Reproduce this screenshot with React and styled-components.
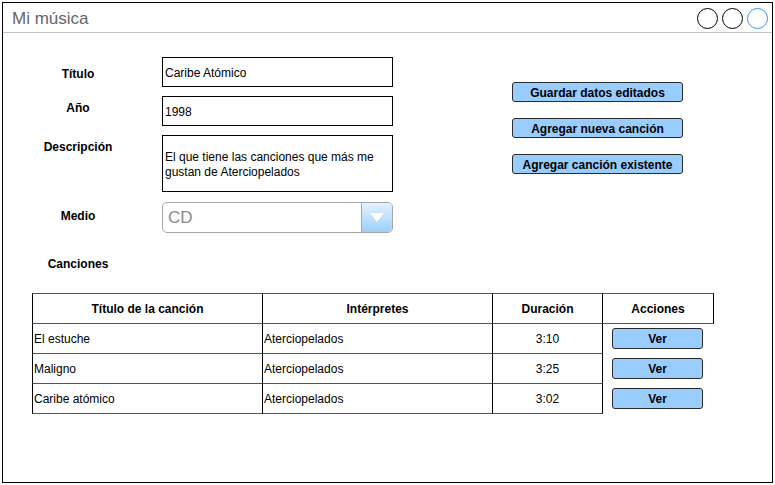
import React from "react";
import styled, { createGlobalStyle } from "styled-components";

const Global = createGlobalStyle`
  html, body { margin: 0; padding: 0; background: #fff; }
  body { font-family: "Liberation Sans", Arial, Helvetica, sans-serif; font-size: 12px; color: #000; }
  * { box-sizing: border-box; }
`;

const Window = styled.div`
  margin: 2px 0 0 2px;
  width: 771px;
  height: 481px;
  border: 1px solid #000;
  display: flex;
  flex-direction: column;
`;

const TitleBar = styled.div`
  height: 30px;
  border-bottom: 1px solid #c4c4c4;
  display: flex;
  align-items: center;
  justify-content: space-between;
  padding: 0 4px 0 9px;
`;

const WindowTitle = styled.div`
  font-size: 17px;
  color: #666;
  line-height: 20px;
  margin-top: 3px;
`;

const Controls = styled.div`
  display: flex;
  gap: 4px;
  margin-top: 1px;
`;

const Circle = styled.div`
  width: 21px;
  height: 21px;
  border-radius: 50%;
  border: 1.5px solid ${(p) => (p.$blue ? "#2a95f5" : "#000")};
`;

const Content = styled.div`
  padding-top: 24px;
  display: flex;
  flex-direction: column;
`;

const TopSection = styled.div`
  display: flex;
  gap: 119px;
`;

const FormGrid = styled.div`
  display: grid;
  grid-template-columns: 150px 231px;
  column-gap: 9px;
  row-gap: 9px;
`;

const Label = styled.div`
  font-weight: bold;
  font-size: 12px;
  line-height: 14px;
  text-align: center;
  padding-top: ${(p) => p.$offset}px;
`;

const TextBox = styled.div`
  height: ${(p) => p.$h || 30}px;
  border: 1px solid #000;
  padding: 2px 2px 0;
  display: flex;
  align-items: center;
  font-size: 12px;
  line-height: 15px;
`;

const Select = styled.div`
  height: 31px;
  margin-top: 1px;
  border: 1px solid #a6a6a6;
  border-radius: 5px;
  display: flex;
  overflow: hidden;
`;

const SelectValue = styled.div`
  flex: 1;
  font-size: 17px;
  color: #8a8a8a;
  display: flex;
  align-items: center;
  padding-left: 5px;
`;

const SelectArrow = styled.div`
  width: 31px;
  border-left: 1px solid #a6a6a6;
  background: linear-gradient(to bottom, #e4f2ff, #9dcffb);
  display: flex;
  align-items: center;
  justify-content: center;
`;

const ButtonColumn = styled.div`
  display: flex;
  flex-direction: column;
  gap: 16px;
  padding-top: 25px;
`;

const ActionButton = styled.div`
  width: ${(p) => p.$w || 171}px;
  height: ${(p) => p.$h || 20}px;
  padding-top: 1px;
  background: #99ccff;
  border: 1px solid #2b2b2b;
  border-radius: 3px;
  font-weight: bold;
  font-size: 12px;
  display: flex;
  align-items: center;
  justify-content: center;
`;

const SectionLabel = styled.div`
  width: 150px;
  font-weight: bold;
  font-size: 12px;
  line-height: 14px;
  text-align: center;
  margin-top: 24px;
`;

const Table = styled.div`
  margin: 22px 0 0 29px;
  display: grid;
  grid-template-columns: 231px 230px 110px 111px;
`;

const HeadCell = styled.div`
  height: 31px;
  border-top: 1px solid #555;
  border-bottom: 1px solid #555;
  border-right: 1px solid #000;
  border-left: ${(p) => (p.$first ? "1px solid #000" : "none")};
  font-weight: bold;
  display: flex;
  align-items: center;
  justify-content: center;
`;

const Cell = styled.div`
  height: 30px;
  border-bottom: 1px solid #555;
  border-right: 1px solid #000;
  border-left: ${(p) => (p.$first ? "1px solid #000" : "none")};
  display: flex;
  align-items: center;
  justify-content: ${(p) => (p.$center ? "center" : "flex-start")};
  padding-left: ${(p) => (p.$center ? 0 : 1)}px;
`;

const ActionCell = styled.div`
  height: 30px;
  display: flex;
  align-items: flex-start;
  justify-content: center;
  padding: 4px 2px 0 0;
`;

const songs = [
  { title: "El estuche", artist: "Aterciopelados", dur: "3:10" },
  { title: "Maligno", artist: "Aterciopelados", dur: "3:25" },
  { title: "Caribe atómico", artist: "Aterciopelados", dur: "3:02" },
];

export default function App() {
  return (
    <>
      <Global />
      <Window>
        <TitleBar>
          <WindowTitle>Mi música</WindowTitle>
          <Controls>
            <Circle />
            <Circle />
            <Circle $blue />
          </Controls>
        </TitleBar>
        <Content>
          <TopSection>
            <FormGrid>
              <Label $offset={10}>Título</Label>
              <TextBox>Caribe Atómico</TextBox>
              <Label $offset={5}>Año</Label>
              <TextBox>1998</TextBox>
              <Label $offset={5}>Descripción</Label>
              <TextBox $h={57}>
                El que tiene las canciones que más me
                <br />
                gustan de Aterciopelados
              </TextBox>
              <Label $offset={8}>Medio</Label>
              <Select>
                <SelectValue>CD</SelectValue>
                <SelectArrow>
                  <svg width="16" height="11" viewBox="0 0 16 11">
                    <polygon points="1,1 15,1 8,10" fill="#fff" />
                  </svg>
                </SelectArrow>
              </Select>
            </FormGrid>
            <ButtonColumn>
              <ActionButton>Guardar datos editados</ActionButton>
              <ActionButton>Agregar nueva canción</ActionButton>
              <ActionButton>Agregar canción existente</ActionButton>
            </ButtonColumn>
          </TopSection>
          <SectionLabel>Canciones</SectionLabel>
          <Table>
            <HeadCell $first>Título de la canción</HeadCell>
            <HeadCell>Intérpretes</HeadCell>
            <HeadCell>Duración</HeadCell>
            <HeadCell>Acciones</HeadCell>
            {songs.map((s) => (
              <React.Fragment key={s.title}>
                <Cell $first>{s.title}</Cell>
                <Cell>{s.artist}</Cell>
                <Cell $center>{s.dur}</Cell>
                <ActionCell>
                  <ActionButton $w={91} $h={21}>Ver</ActionButton>
                </ActionCell>
              </React.Fragment>
            ))}
          </Table>
        </Content>
      </Window>
    </>
  );
}
